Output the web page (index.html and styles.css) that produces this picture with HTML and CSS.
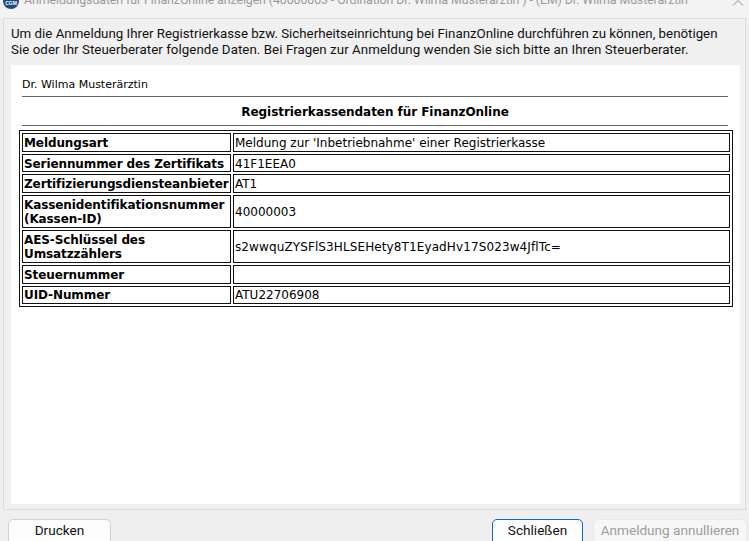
FILE: index.html
```html
<!DOCTYPE html>
<html lang="de">
<head>
<meta charset="utf-8">
<title>Anmeldungsdaten</title>
<link rel="stylesheet" href="styles.css">
</head>
<body>
<div class="window">
  <header class="titlebar">
    <svg class="logo" width="18" height="10" viewBox="0 0 18 10"><circle cx="9" cy="1" r="8" fill="#1d4a78"/><text x="9" y="4.5" class="logo-text">CGM</text></svg>
    <span class="title">Anmeldungsdaten für FinanzOnline anzeigen (40000003 - Ordination Dr. Wilma Musterärztin ) - (EM) Dr. Wilma Musterärztin</span>
    <svg class="close" width="12" height="6" viewBox="0 0 12 6"><path d="M1 5.5 L6 0.5 L11 5.5" fill="none" stroke="#8c8c8c" stroke-width="1"/></svg>
  </header>
  <main class="panel">
    <p class="intro">Um die Anmeldung Ihrer Registrierkasse bzw. Sicherheitseinrichtung bei FinanzOnline durchführen zu können, benötigen<br><span class="intro-second">Sie oder Ihr Steuerberater folgende Daten. Bei Fragen zur Anmeldung wenden Sie sich bitte an Ihren Steuerberater.</span></p>
    <section class="sheet">
      <div class="person">Dr. Wilma Musterärztin</div>
      <h1 class="heading">Registrierkassendaten für FinanzOnline</h1>
      <table class="data">
        <tr class="r1"><th>Meldungsart</th><td>Meldung zur 'Inbetriebnahme' einer Registrierkasse</td></tr>
        <tr class="r2 lowered"><th>Seriennummer des Zertifikats</th><td>41F1EEA0</td></tr>
        <tr class="r1"><th>Zertifizierungsdiensteanbieter</th><td>AT1</td></tr>
        <tr class="r3"><th>Kassenidentifikationsnummer<br>(Kassen-ID)</th><td>40000003</td></tr>
        <tr class="r3"><th>AES-Schlüssel des<br>Umsatzzählers</th><td class="key">s2wwquZYSFlS3HLSEHety8T1EyadHv17S023w4JflTc=</td></tr>
        <tr class="r1"><th>Steuernummer</th><td></td></tr>
        <tr class="r2"><th>UID-Nummer</th><td>ATU22706908</td></tr>
      </table>
    </section>
  </main>
  <footer class="actions">
    <button class="btn print">Drucken</button>
    <span class="spacer"></span>
    <button class="btn primary">Schließen</button>
    <button class="btn disabled" disabled>Anmeldung annullieren</button>
  </footer>
</div>
</body>
</html>
```
FILE: styles.css
```css
* { box-sizing: border-box; }
html, body { margin: 0; height: 100%; overflow: hidden; }
body { background: #efefef; font-family: Roboto, sans-serif; }
.window { width: 749px; height: 541px; display: flex; flex-direction: column; overflow: hidden; }
.titlebar { height: 18px; flex: none; display: flex; align-items: flex-start; background: #f3f3f3; padding-left: 1px; overflow: hidden; }
.logo { flex: none; margin-right: 4px; margin-left: 1px; }
.logo-text { font-family: "Liberation Sans", sans-serif; font-size: 5px; font-weight: 700; fill: #fff; text-anchor: middle; }
.title { font-size: 12.4px; letter-spacing: -0.1px; line-height: 16px; margin-top: -8px; color: #9a9a9a; white-space: nowrap; flex: 1; overflow: hidden; }
.close { flex: none; margin: 0 5px 0 6px; }
.panel { flex: none; height: 492px; margin: 0 3px 0 3px; border: 1px solid #dcdcdc; padding: 7px 5px 5px 7px; display: flex; flex-direction: column; background: #f0f0f0; }
.intro { margin: 0 0 6px 0; font-size: 13.3px; line-height: 16px; height: 33px; color: #111; white-space: nowrap; }
.intro-second { letter-spacing: 0.06px; }
.sheet { flex: 1; background: #fff; padding: 13px 12px 0 11px; font-family: "DejaVu Sans", sans-serif; font-size: 12px; color: #000; }
.person { font-size: 11px; line-height: 13px; height: 19px; border-bottom: 1px solid #666; }
.heading { margin: 0; font-size: 12px; letter-spacing: -0.05px; line-height: 14px; padding: 8px 0 6px; text-align: center; border-bottom: 1px solid #666; font-weight: 700; }
.data { width: 714px; margin: 4px 0 0 -3px; border: 1px solid #111; border-collapse: separate; border-spacing: 2px; table-layout: fixed; }
.data th, .data td { border: 1px solid #111; padding: 0 1px; line-height: 14px; font-size: 12px; vertical-align: middle; text-align: left; overflow: hidden; white-space: nowrap; }
.data th { width: 209px; font-weight: 700; letter-spacing: -0.1px; }
.data .key { letter-spacing: 0.11px; }
.r1 th, .r1 td { height: 19px; }
.r2 th, .r2 td { height: 18px; }
.r3 th, .r3 td { height: 33px; }
.lowered th, .lowered td { padding-top: 1px; }
.actions { flex: none; display: flex; align-items: flex-start; padding: 9px 2px 0 8px; gap: 10px; }
.spacer { flex: 1; }
.btn { height: 30px; font-family: Roboto, sans-serif; font-size: 13.6px; color: #111; background: #fdfdfd; border: 1px solid #d0d0d0; border-radius: 5px; padding: 0 0 8px; }
.print { width: 103px; }
.primary { width: 91px; border: 1px solid #0f6cbd; }
.disabled { width: 154px; color: #9c9c9c; background: #f7f7f7; border-color: #e8e8e8; }
```
